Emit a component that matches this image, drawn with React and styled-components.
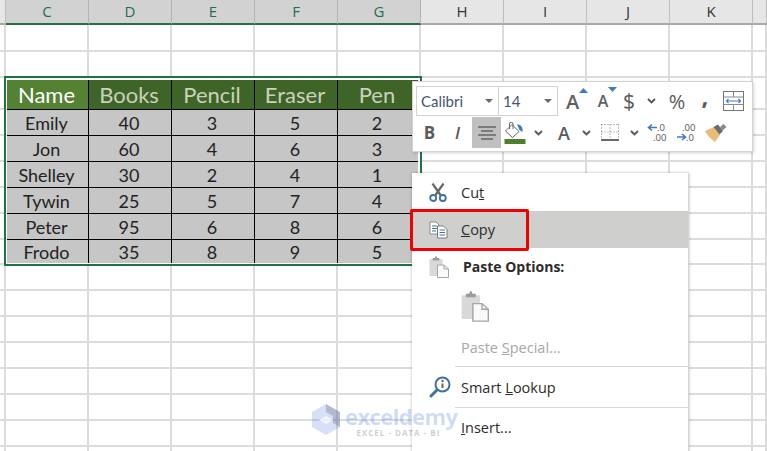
import styled, { createGlobalStyle } from "styled-components";

const GlobalStyle = createGlobalStyle`
  html, body {
    margin: 0;
    padding: 0;
    background: #fff;
  }
`;

const COLUMNS = ["C", "D", "E", "F", "G", "H", "I", "J", "K"];
const PEOPLE = [
  ["Emily", 40, 3, 5, 2],
  ["Jon", 60, 4, 6, 3],
  ["Shelley", 30, 2, 4, 1],
  ["Tywin", 25, 5, 7, 4],
  ["Peter", 95, 6, 8, 6],
  ["Frodo", 35, 8, 9, 5],
];
const HEADINGS = ["Name", "Books", "Pencil", "Eraser", "Pen"];

const Page = styled.div`
  position: relative;
  width: 767px;
  height: 451px;
  overflow: hidden;
  background: #fff;
`;

const Row = styled.div`
  display: grid;
  grid-template-columns: 6px repeat(9, 83px) 1fr;
  height: ${(p) => p.$h}px;
`;

const HeadCell = styled.div`
  display: flex;
  align-items: center;
  justify-content: center;
  box-sizing: border-box;
  padding-bottom: 2px;
  font: 15px "Open Sans", sans-serif;
  color: ${(p) => (p.$on ? "#1f6f50" : "#333")};
  background: ${(p) => (p.$on ? "#d2d2d2" : "#e6e6e6")};
  border-right: 1px solid ${(p) => (p.$on ? "#b4b4b4" : "#bdbdbd")};
  border-bottom: 2px solid ${(p) => (p.$on ? "#217346" : "#a8a8a8")};
`;

const Cell = styled.div`
  box-sizing: border-box;
  border-right: 2px solid #dcdcdc;
  border-bottom: 2px solid #dcdcdc;
`;

const TableCell = styled.div`
  display: flex;
  align-items: center;
  justify-content: center;
  box-sizing: border-box;
  padding-right: 2px;
  margin: ${(p) => (p.$top ? "2px" : "0")} ${(p) => (p.$last ? "3px" : "0")} ${(p) => (p.$end ? "2px" : "0")} ${(p) => (p.$first ? "1px" : "0")};
  background: #c6c6c6;
  color: #222;
  font: 18px Lato, sans-serif;
  border-right: ${(p) => (p.$last ? "none" : "1px solid #000")};
  border-bottom: ${(p) => (p.$end ? "none" : "1px solid #000")};
`;

const TitleCell = styled(TableCell)`
  padding-bottom: 1px;
  font-size: 22px;
  color: ${(p) => (p.$active ? "#fff" : "#c9d2bd")};
  background: ${(p) => (p.$active ? "#548132" : "#3f6427")};
`;

const SelectionFrame = styled.div`
  position: absolute;
  left: 4px;
  top: 76px;
  width: 418px;
  height: 190px;
  box-sizing: border-box;
  border: 2px solid #217346;
`;

const MiniBar = styled.div`
  position: absolute;
  left: 412px;
  top: 81px;
  width: 341px;
  height: 71px;
  display: flex;
  flex-direction: column;
  gap: 1px;
  box-sizing: border-box;
  padding: 4px 3px;
  background: #fff;
  border: 1px solid #d4d4d4;
  box-shadow: 1px 1px 3px rgba(0, 0, 0, 0.18);
`;

const BarRow = styled.div`
  display: flex;
  flex: none;
  height: ${(p) => p.$h}px;
`;

const FieldBox = styled.div`
  display: flex;
  align-items: center;
  justify-content: space-between;
  box-sizing: border-box;
  width: ${(p) => p.$w}px;
  padding: 0 5px 0 4px;
  border: 1px solid #d2d2d2;
  margin-right: -1px;
  color: #47566e;
  font: 15px Lato, sans-serif;
`;

const Caret = styled.span`
  width: 0;
  height: 0;
  border-left: 4px solid transparent;
  border-right: 4px solid transparent;
  border-top: 4px solid #6a6a6a;
`;

const Tool = styled.div`
  display: flex;
  align-items: center;
  justify-content: center;
  flex: none;
  box-sizing: border-box;
  width: ${(p) => p.$w}px;
  padding-bottom: ${(p) => p.$lift || 0}px;
  background: ${(p) => (p.$on ? "#c0c0c0" : "transparent")};
  color: #5a5a5a;
  font: ${(p) => p.$weight || 400} ${(p) => p.$size || 18}px "Open Sans", sans-serif;
  font-style: ${(p) => (p.$italic ? "italic" : "normal")};
`;

const GrowLetter = styled.span`
  position: relative;
  font: 600 ${(p) => p.$size}px "Open Sans", sans-serif;
  color: #5f5f5f;
`;

const Menu = styled.div`
  position: absolute;
  left: 412px;
  top: 173px;
  width: 277px;
  height: 290px;
  display: flex;
  flex-direction: column;
  box-sizing: border-box;
  background: #fff;
  border-right: 1px solid #d4d4d4;
  box-shadow: 0 0 3px rgba(0, 0, 0, 0.25);
  font: 14.5px "Open Sans", sans-serif;
  color: #2b2b2b;
`;

const MenuItem = styled.div`
  display: flex;
  align-items: center;
  flex: none;
  height: ${(p) => p.$h}px;
  background: ${(p) => (p.$on ? "#cfcfcd" : "transparent")};
  color: ${(p) => (p.$off ? "#a8a8a8" : "inherit")};
`;

const SectionLabel = styled.span`
  padding-left: 2px;
  font-size: 14px;
  font-weight: 700;
`;

const IconSlot = styled.div`
  display: flex;
  align-items: center;
  flex: none;
  box-sizing: border-box;
  width: 49px;
  padding-left: 17px;
`;

const Divider = styled.div`
  flex: none;
  height: 1px;
  margin-left: 43px;
  background: #d8d8d8;
`;

const CopyMark = styled.div`
  position: absolute;
  left: 410px;
  top: 209px;
  width: 119px;
  height: 42px;
  box-sizing: border-box;
  border: 3px solid #f00000;
  border-radius: 2px;
`;

const Watermark = styled.div`
  position: absolute;
  left: 312px;
  top: 404px;
  display: flex;
  gap: 5px;
  pointer-events: none;
`;

const MarkWords = styled.div`
  display: flex;
  flex-direction: column;
  align-items: flex-end;
`;

const MarkName = styled.span`
  font: 700 22px/24px "Open Sans", sans-serif;
  letter-spacing: -0.6px;
  color: rgba(84, 128, 232, 0.28);
`;

const MarkTag = styled.span`
  margin: 0 17px 0 0;
  font: 700 8px/10px "Open Sans", sans-serif;
  letter-spacing: 1px;
  color: rgba(110, 110, 110, 0.35);
`;

const Scissors = () => (
  <svg width="18" height="19" viewBox="0 0 18 19" fill="none">
    <path d="M3.5 0.5 L11.5 12 M14.5 0.5 L6.5 12" stroke="#666" strokeWidth="2.2" />
    <circle cx="4.2" cy="15" r="3" stroke="#41719f" strokeWidth="1.8" />
    <circle cx="13.8" cy="15" r="3" stroke="#41719f" strokeWidth="1.8" />
  </svg>
);

const CopyIcon = () => (
  <svg width="19" height="18" viewBox="0 0 19 18" fill="none">
    <path d="M1 1 H7 L10 4 V13 H1 Z" fill="#fff" stroke="#8c8c8c" />
    <path d="M3 5 H8 M3 7.5 H8 M3 10 H7" stroke="#41719f" />
    <path d="M8.5 5 H14.5 L18 8.5 V17 H8.5 Z" fill="#fff" stroke="#7a7a7a" />
    <path d="M10.5 9 H16 M10.5 11.5 H16 M10.5 14 H16" stroke="#41719f" />
  </svg>
);

const PasteIcon = ({ size }) => (
  <svg width={size} height={size * 1.1} viewBox="0 0 20 22" fill="none">
    <rect x="0.5" y="3" width="13" height="17" rx="1" fill="#d9d7d7" />
    <path d="M4 4 V2.5 H6 L7 0.5 L8 2.5 H10 V4 Z" fill="#9b9b9b" stroke="#9b9b9b" />
    <path d="M8.5 9 H15 L19.5 13 V21.5 H8.5 Z" fill="#fafafa" stroke="#a4a4a4" />
    <path d="M15 9 V13 H19.5" stroke="#a4a4a4" />
  </svg>
);

const LookupIcon = () => (
  <svg width="22" height="22" viewBox="0 0 22 22" fill="none">
    <circle cx="13.5" cy="8.5" r="7" fill="#fff" stroke="#41719f" strokeWidth="2" />
    <path d="M8 14 L2 20" stroke="#41719f" strokeWidth="3" strokeLinecap="round" />
    <circle cx="13.5" cy="5" r="1.2" fill="#666" />
    <path d="M13.5 7.5 V12" stroke="#666" strokeWidth="2" />
  </svg>
);

const Triangle = ({ down }) => (
  <svg width="9" height="5" viewBox="0 0 9 5" style={{ position: "absolute", top: down ? -3 : 0, right: -9 }}>
    <path d={down ? "M0 0 H9 L4.5 5 Z" : "M0 5 H9 L4.5 0 Z"} fill="#3f7cbf" />
  </svg>
);

const Chevron = () => (
  <svg width="9" height="6" viewBox="0 0 9 6" fill="none">
    <path d="M1 1 L4.5 4.5 L8 1" stroke="#555" strokeWidth="1.8" />
  </svg>
);

const WrapIcon = () => (
  <svg width="21" height="20" viewBox="0 0 21 20" fill="none">
    <rect x="0.5" y="0.5" width="20" height="19" stroke="#777" />
    <path d="M0.5 6 H20.5 M0.5 13.5 H20.5 M10.5 0.5 V6 M10.5 13.5 V19.5" stroke="#8a8a8a" />
    <path d="M3.5 10 H17.5 M5.5 8 L3.5 10 L5.5 12 M15.5 8 L17.5 10 L15.5 12" stroke="#3f7cbf" strokeWidth="1.1" />
  </svg>
);

const BucketIcon = () => (
  <svg width="22" height="22" viewBox="0 0 22 22" fill="none">
    <path d="M1.5 9 L8 2.5 L15 9.5 L8.5 15.5 Z" fill="#fff" stroke="#666" />
    <path d="M5.5 7 V2 A1.6 1.6 0 0 1 9 2 V7" stroke="#666" />
    <path d="M13 2.5 C17 2.5 19 5 18.5 10 L15.5 8 Z" fill="#3f7cbf" />
    <rect x="0.5" y="17" width="21" height="5" fill="#4e7f2b" />
  </svg>
);

const BordersIcon = () => (
  <svg width="18" height="17" viewBox="0 0 18 17" fill="none">
    <path d="M0.5 0.5 H17.5 M0.5 0.5 V15 M17.5 0.5 V15 M9 0.5 V15 M0.5 8 H17.5" stroke="#777" strokeDasharray="1 2" />
    <path d="M0 16 H18" stroke="#444" strokeWidth="1.6" />
  </svg>
);

const DecimalIcon = ({ flip }) => (
  <svg width="22" height="19" viewBox="0 0 22 19">
    <text x={flip ? 6 : 10} y="8" fontFamily="Open Sans" fontSize="9.5" fill="#555">{flip ? ".00" : ".0"}</text>
    <text x={flip ? 10 : 6} y="17.5" fontFamily="Open Sans" fontSize="9.5" fill="#555">{flip ? ".0" : ".00"}</text>
    {flip ? (
      <path d="M1 14 H9 M6 11 L9.5 14 L6 17" stroke="#3f7cbf" strokeWidth="1.6" fill="none" />
    ) : (
      <path d="M10 4.5 H2 M5 1.5 L1.5 4.5 L5 7.5" stroke="#3f7cbf" strokeWidth="1.6" fill="none" />
    )}
  </svg>
);

const BrushIcon = () => (
  <svg width="22" height="18" viewBox="0 0 22 18">
    <path d="M0 7 L9 3 L15 11 L10 18 C6 15 2 11 0 7 Z" fill="#e8bd78" />
    <path d="M8.5 3 L13 0.5 L18 7 L14.5 10.5 Z" fill="#6b6b6b" />
    <path d="M15 3 L18.5 0 L21.5 3 L17.5 6.5 Z" fill="#8a8a8a" />
  </svg>
);

const AlignIcon = () => (
  <svg width="18" height="14" viewBox="0 0 18 14" fill="none">
    <path d="M0 1 H18 M3 5 H15 M0 9 H18 M3 13 H15" stroke="#666" strokeWidth="1.4" />
  </svg>
);

const LogoMark = () => (
  <svg width="28" height="31" viewBox="0 0 28 31">
    <path d="M14 0 L28 8 V23 L14 31 L0 23 V8 Z" fill="rgba(90,130,230,0.25)" />
    <path d="M14 0 L28 8 V23 L21 19 V12 L14 8 Z" fill="rgba(90,90,90,0.28)" />
    <path d="M7 16 L14 12 L21 16 L14 20 Z" fill="#fff" opacity="0.7" />
  </svg>
);

const BlankRow = ({ h }) => (
  <Row $h={h}>
    {Array.from({ length: 11 }, (_, i) => (
      <Cell key={i} />
    ))}
  </Row>
);

// columns H to K and the rest of the row, to the right of the table
const RestCells = () => (
  <>
    <Cell />
    <Cell />
    <Cell />
    <Cell />
    <Cell />
  </>
);

export default function App() {
  return (
    <Page>
      <GlobalStyle />
      <Row $h={25}>
        <HeadCell />
        {COLUMNS.map((c, i) => (
          <HeadCell key={c} $on={i < 5}>
            {c}
          </HeadCell>
        ))}
        <HeadCell />
      </Row>
      <BlankRow h={27} />
      <BlankRow h={26} />
      <Row $h={32}>
        <Cell />
        {HEADINGS.map((t, i) => (
          <TitleCell key={t} $top $first={i === 0} $last={i === 4} $active={i === 0}>
            {t}
          </TitleCell>
        ))}
        <RestCells />
      </Row>
      {PEOPLE.map((person, r) => (
        <Row key={person[0]} $h={r === 5 ? 25 : 26}>
          <Cell />
          {person.map((v, i) => (
            <TableCell key={i} $first={i === 0} $last={i === 4} $end={r === 5}>
              {v}
            </TableCell>
          ))}
          <RestCells />
        </Row>
      ))}
      {[0, 1, 2, 3, 4, 5, 6, 7].map((n) => (
        <BlankRow key={n} h={26} />
      ))}

      <SelectionFrame />

      <MiniBar>
        <BarRow $h={30}>
          <FieldBox $w={83}>
            Calibri
            <Caret />
          </FieldBox>
          <FieldBox $w={60}>
            14
            <Caret />
          </FieldBox>
          <Tool $w={31}>
            <GrowLetter $size={20}>
              A
              <Triangle />
            </GrowLetter>
          </Tool>
          <Tool $w={30}>
            <GrowLetter $size={16}>
              A
              <Triangle down />
            </GrowLetter>
          </Tool>
          <Tool $w={22} $size={21}>$</Tool>
          <Tool $w={22}><Chevron /></Tool>
          <Tool $w={30} $size={20}>%</Tool>
          <Tool $w={26} $size={24} $weight={700} $lift={12}>,</Tool>
          <Tool $w={30}><WrapIcon /></Tool>
        </BarRow>
        <BarRow $h={31}>
          <Tool $w={27} $size={17} $weight={700}>B</Tool>
          <Tool $w={29} $size={17} $weight={600} $italic>I</Tool>
          <Tool $w={29} $on><AlignIcon /></Tool>
          <Tool $w={27}><BucketIcon /></Tool>
          <Tool $w={20}><Chevron /></Tool>
          <Tool $w={32} $size={18} $weight={600}>A</Tool>
          <Tool $w={12}><Chevron /></Tool>
          <Tool $w={36}><BordersIcon /></Tool>
          <Tool $w={12}><Chevron /></Tool>
          <Tool $w={36}><DecimalIcon /></Tool>
          <Tool $w={22}><DecimalIcon flip /></Tool>
          <Tool $w={36}><BrushIcon /></Tool>
        </BarRow>
      </MiniBar>

      <Menu>
        <MenuItem $h={38}>
          <IconSlot><Scissors /></IconSlot>
          <span>Cu<u>t</u></span>
        </MenuItem>
        <MenuItem $h={37} $on>
          <IconSlot><CopyIcon /></IconSlot>
          <span><u>C</u>opy</span>
        </MenuItem>
        <MenuItem $h={37}>
          <IconSlot><PasteIcon size={20} /></IconSlot>
          <SectionLabel>Paste Options:</SectionLabel>
        </MenuItem>
        <MenuItem $h={43}>
          <IconSlot />
          <PasteIcon size={28} />
        </MenuItem>
        <MenuItem $h={38} $off>
          <IconSlot />
          <span>Paste <u>S</u>pecial...</span>
        </MenuItem>
        <Divider />
        <MenuItem $h={40}>
          <IconSlot><LookupIcon /></IconSlot>
          <span>Smart <u>L</u>ookup</span>
        </MenuItem>
        <Divider />
        <MenuItem $h={39}>
          <IconSlot />
          <span><u>I</u>nsert...</span>
        </MenuItem>
      </Menu>

      <CopyMark />

      <Watermark>
        <LogoMark />
        <MarkWords>
          <MarkName>exceldemy</MarkName>
          <MarkTag>EXCEL - DATA - BI</MarkTag>
        </MarkWords>
      </Watermark>
    </Page>
  );
}
